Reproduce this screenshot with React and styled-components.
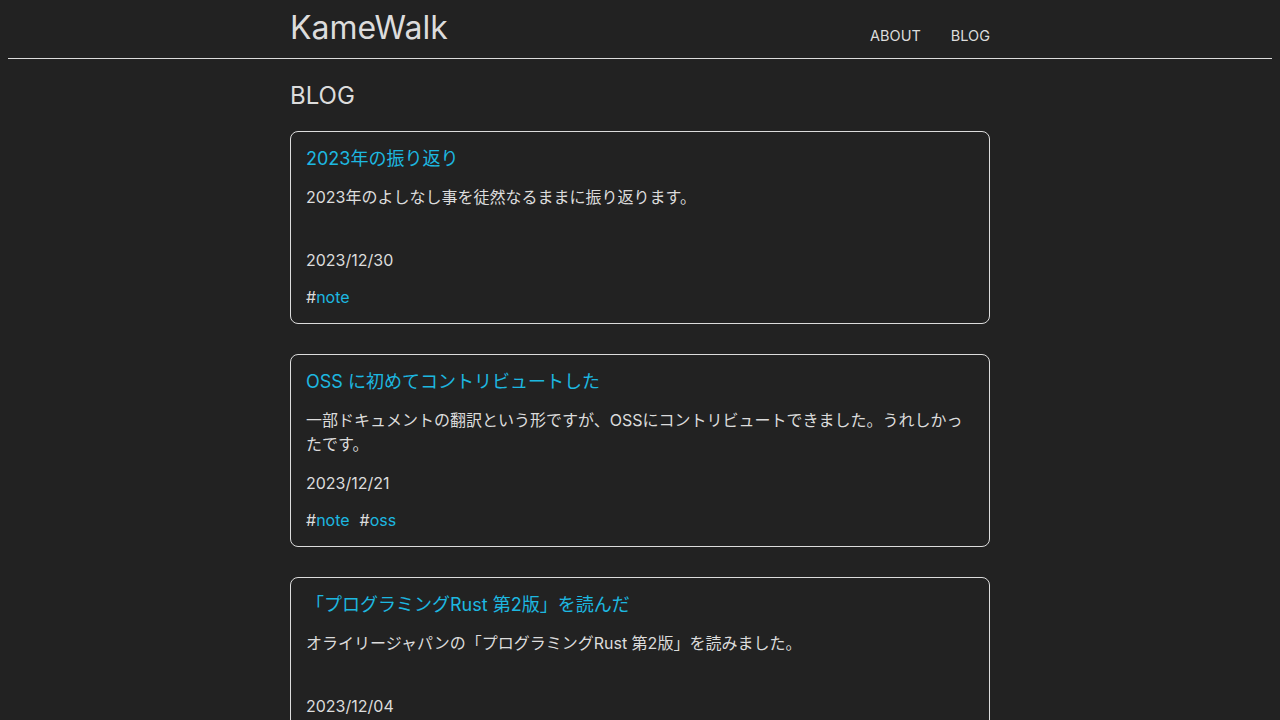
import React from 'react';
import styled, { createGlobalStyle } from 'styled-components';

const posts = [
  {
    title: '2023年の振り返り',
    description: '2023年のよしなし事を徒然なるままに振り返ります。',
    date: '2023/12/30',
    tags: ['note'],
  },
  {
    title: 'OSS に初めてコントリビュートした',
    description:
      '一部ドキュメントの翻訳という形ですが、OSSにコントリビュートできました。うれしかったです。',
    date: '2023/12/21',
    tags: ['note', 'oss'],
  },
  {
    title: '「プログラミングRust 第2版」を読んだ',
    description: 'オライリージャパンの「プログラミングRust 第2版」を読みました。',
    date: '2023/12/04',
    tags: ['rust'],
  },
];

const App = () => {
  return (
    <>
      <GlobalStyle />
      <Header>
        <HeaderInner>
          <SiteTitle>KameWalk</SiteTitle>
          <Nav>
            <NavLink>ABOUT</NavLink>
            <NavLink>BLOG</NavLink>
          </Nav>
        </HeaderInner>
      </Header>
      <Main>
        <PageTitle>BLOG</PageTitle>
        <PostList>
          {posts.map((post) => (
            <Card key={post.date}>
              <PostTitle>{post.title}</PostTitle>
              <Description>{post.description}</Description>
              <DateText>{post.date}</DateText>
              <Tags>
                {post.tags.map((tag) => (
                  <Tag key={tag}>
                    #<TagLink>{tag}</TagLink>
                  </Tag>
                ))}
              </Tags>
            </Card>
          ))}
        </PostList>
      </Main>
    </>
  );
};

const GlobalStyle = createGlobalStyle`
  body {
    margin: 8px;
    background-color: #222222;
    color: #dcdcdc;
    font-family: Inter, "Noto Sans CJK JP", sans-serif;
  }
`;

const Header = styled.header`
  border-bottom: 1px solid #dcdcdc;
  height: 50px;
`;

const HeaderInner = styled.div`
  width: 700px;
  margin: 0 auto;
  display: flex;
  justify-content: space-between;
  align-items: flex-start;
`;

const SiteTitle = styled.h1`
  margin: 0;
  font-size: 32px;
  font-weight: 400;
  line-height: 40px;
  color: #dcdcdc;
`;

const Nav = styled.nav`
  display: flex;
  gap: 30px;
  padding-top: 17px;
`;

const NavLink = styled.a`
  font-size: 14.5px;
  line-height: 22px;
  color: #dcdcdc;
  cursor: pointer;
`;

const Main = styled.main`
  width: 700px;
  margin: 0 auto;
`;

const PageTitle = styled.h2`
  margin: 21px 0 19px;
  font-size: 24px;
  font-weight: 400;
  line-height: 32px;
`;

const PostList = styled.div`
  display: flex;
  flex-direction: column;
  gap: 30px;
`;

const Card = styled.article`
  border: 1px solid #dcdcdc;
  border-radius: 8px;
  padding: 14px 15px 14px;
  display: flex;
  flex-direction: column;
  gap: 14px;
`;

const PostTitle = styled.a`
  font-size: 18px;
  line-height: 24px;
  margin-top: 1px;
  color: #1db8e0;
  cursor: pointer;
`;

const Description = styled.p`
  margin: 0;
  font-size: 16px;
  line-height: 24px;
  min-height: 48px;
`;

const DateText = styled.div`
  font-size: 16px;
  line-height: 24px;
  margin-top: 1px;
`;

const Tags = styled.div`
  display: flex;
  gap: 10px;
  font-size: 16px;
  line-height: 24px;
  margin-top: -1px;
`;

const Tag = styled.span``;

const TagLink = styled.a`
  color: #1db8e0;
  cursor: pointer;
`;

export default App;
